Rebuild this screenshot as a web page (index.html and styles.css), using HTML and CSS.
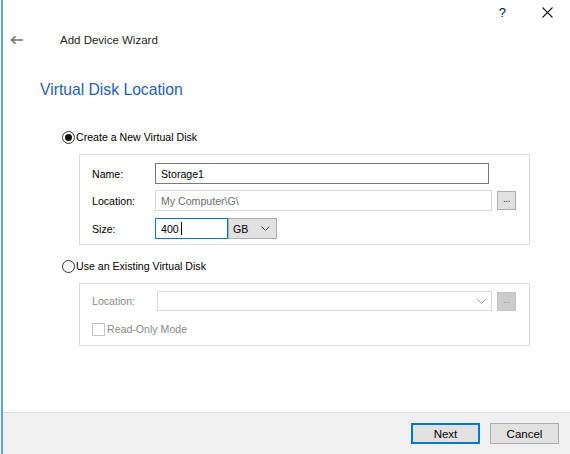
FILE: index.html
```html
<!DOCTYPE html>
<html>
<head>
<meta charset="utf-8">
<link rel="stylesheet" href="styles.css">
</head>
<body>
<div class="window">
  <div class="titlebar">
    <span class="help">?</span>
    <svg class="close" width="11" height="11" viewBox="0 0 11 11"><path d="M0.5 0.5 L10.5 10.5 M10.5 0.5 L0.5 10.5" stroke="#1a1a1a" stroke-width="1.1" fill="none"/></svg>
  </div>
  <div class="header">
    <svg class="back" width="14" height="10" viewBox="0 0 14 10"><path d="M13 5 H2 M5.5 1.2 L1.6 5 L5.5 8.8" stroke="#707070" stroke-width="1.6" fill="none"/></svg>
    <span class="title">Add Device Wizard</span>
  </div>
  <div class="content">
    <h1 class="heading">Virtual Disk Location</h1>

    <div class="option option-first"><span class="radio checked"></span><span>Create a New Virtual Disk</span></div>
    <div class="group group-create">
      <div class="row">
        <span class="label">Name:</span>
        <div class="input input-name">Storage1</div>
      </div>
      <div class="row">
        <span class="label">Location:</span>
        <div class="input input-loc placeholder">My Computer\G\</div>
        <div class="dots-btn">...</div>
      </div>
      <div class="row">
        <span class="label">Size:</span>
        <div class="input input-size">400<span class="caret"></span></div>
        <div class="select">GB<svg class="chev" width="9" height="5" viewBox="0 0 9 5"><path d="M0.5 0.5 L4.5 4.5 L8.5 0.5" stroke="#555" stroke-width="1" fill="none"/></svg></div>
      </div>
    </div>

    <div class="option option-second"><span class="radio"></span><span>Use an Existing Virtual Disk</span></div>
    <div class="group group-existing">
      <div class="row row-combo">
        <span class="label label-disabled">Location:</span>
        <div class="combo"><svg class="chev" width="9" height="5" viewBox="0 0 9 5"><path d="M0.5 0.5 L4.5 4.5 L8.5 0.5" stroke="#9a9a9a" stroke-width="1" fill="none"/></svg></div>
        <div class="dots-btn disabled">...</div>
      </div>
      <div class="row-check">
        <span class="checkbox"></span><span class="label-disabled">Read-Only Mode</span>
      </div>
    </div>
  </div>
  <div class="footer">
    <button class="btn btn-default">Next</button>
    <button class="btn">Cancel</button>
  </div>
</div>
</body>
</html>
```

FILE: styles.css
```css
* { box-sizing: border-box; }
html, body { margin: 0; padding: 0; background: #fff; }
body { width: 570px; height: 454px; overflow: hidden; font-family: "Liberation Sans", Arial, sans-serif; }

.window {
  margin-left: 1px;
  border-left: 2px solid #5aa2e8;
  height: 454px;
  display: flex;
  flex-direction: column;
  background: #fff;
}

.titlebar {
  height: 26px;
  display: flex;
  justify-content: flex-end;
  align-items: center;
  padding-right: 17px;
}
.help { font-size: 13px; color: #111; margin-right: 36px; line-height: 13px; margin-top: -1px; }
.close { display: block; margin-top: -1px; }

.header {
  height: 28px;
  display: flex;
  align-items: center;
}
.back { margin-left: 7px; display: block; }
.title { margin-left: 36px; font-size: 11.5px; color: #1e1e1e; }

.content { padding-left: 37px; }

.heading {
  margin: 26px 0 0 0;
  font-weight: normal;
  font-size: 15.7px;
  line-height: 20px;
  height: 20px;
  color: #1c5fc9;
}

.option {
  display: flex;
  align-items: center;
  height: 16px;
  margin-left: 22px;
  font-size: 10.6px;
  color: #000;
}
.option-first { margin-top: 29px; }
.option-second { margin-top: 13px; }

.radio {
  width: 13px;
  height: 13px;
  border: 1px solid #333;
  border-radius: 50%;
  margin-right: 1px;
  display: flex;
  align-items: center;
  justify-content: center;
  background: #fff;
}
.radio.checked::after {
  content: "";
  width: 7px;
  height: 7px;
  border-radius: 50%;
  background: #111;
}

.group {
  margin: 9px 0 0 39px;
  width: 451px;
  border: 1px solid #dcdcdc;
  padding-left: 12px;
  font-size: 10.6px;
}
.group-create { height: 91px; padding-top: 8px; }
.group-existing { height: 63px; padding-top: 7px; }

.row {
  display: flex;
  align-items: center;
  height: 21px;
}
.group-create .row + .row { margin-top: 6px; }
.group-create .row:last-child { margin-top: 7px; }

.label { width: 63px; color: #000; }
.label-disabled { color: #8a8a8a; }
.group-existing .label { width: 65px; }

.input {
  height: 21px;
  border: 1px solid #7a7a7a;
  padding-left: 5px;
  display: flex;
  align-items: center;
  color: #000;
  background: #fff;
}
.input-name { width: 334px; }
.input-loc { width: 337px; border-color: #d9d9d9; }
.placeholder { color: #6d6d6d; }
.input-size { width: 73px; border-color: #0078d7; }
.caret { display: inline-block; width: 1px; height: 13px; background: #000; margin-left: 2px; }

.dots-btn {
  width: 19px;
  height: 19px;
  margin-left: 5px;
  border: 1px solid #adadad;
  background: #e1e1e1;
  font-size: 10px;
  line-height: 14px;
  text-align: center;
  color: #2a2a8a;
  letter-spacing: -0.5px;
}
.dots-btn.disabled { background: #cccccc; border-color: #c4c4c4; color: #9a9a9a; margin-left: 5px; }

.select {
  width: 49px;
  height: 21px;
  border: 1px solid #adadad;
  background: #e1e1e1;
  display: flex;
  align-items: center;
  justify-content: space-between;
  padding: 0 6px 0 4px;
  color: #000;
}
.chev { display: block; }

.row-combo { height: 20px; }
.combo {
  width: 335px;
  height: 20px;
  border: 1px solid #d9d9d9;
  display: flex;
  align-items: center;
  justify-content: flex-end;
  padding-right: 5px;
}

.row-check {
  display: flex;
  align-items: center;
  height: 14px;
  margin-top: 11px;
}
.checkbox {
  width: 13px;
  height: 13px;
  border: 1px solid #c4c4c4;
  margin-right: 2px;
  background: #fff;
}

.footer {
  margin-top: auto;
  height: 42px;
  border-top: 1px solid #dfdfdf;
  background: #f0f0f0;
  display: flex;
  justify-content: flex-end;
  align-items: flex-start;
  padding: 10px 11px 0 0;
  gap: 10px;
}
.btn {
  width: 69px;
  height: 21px;
  border: 1px solid #adadad;
  background: #e1e1e1;
  font-family: "Liberation Sans", Arial, sans-serif;
  font-size: 11.5px;
  color: #000;
  padding: 0;
  margin: 0;
}
.btn-default { border: 2px solid #0078d7; }
```
